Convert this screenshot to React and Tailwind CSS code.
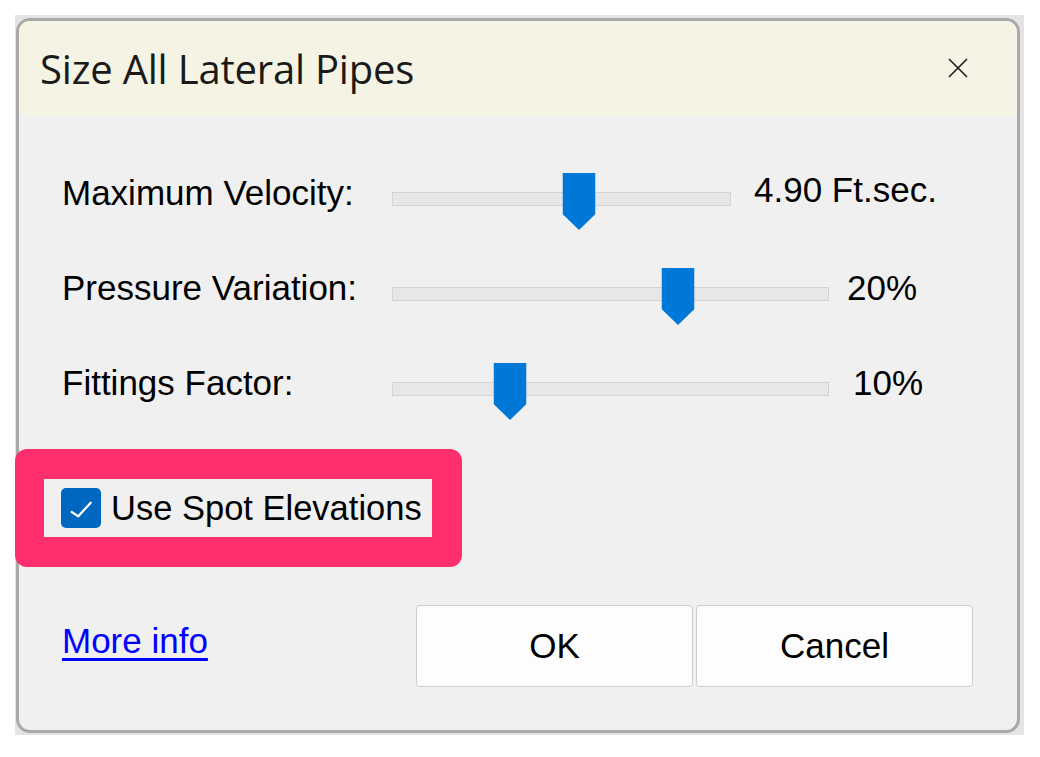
const arial = { fontFamily: '"Liberation Sans", Arial, sans-serif' };

const sliders = [
  { label: "Maximum Velocity:", value: "4.90 Ft.sec.", pos: 0.553, width: "w-[339px]", valueClass: "ml-[23px] -mt-[3px]" },
  { label: "Pressure Variation:", value: "20%", pos: 0.656, width: "w-[437px]", valueClass: "ml-[18px]" },
  { label: "Fittings Factor:", value: "10%", pos: 0.269, width: "w-[437px]", valueClass: "ml-[24px]" },
];

function Thumb({ pos }) {
  return (
    <svg
      className="absolute -top-[20px] -translate-x-1/2"
      style={{ left: `${pos * 100}%` }}
      width="33"
      height="57"
      viewBox="0 0 33 57"
    >
      <polygon points="0,0 33,0 33,41 16.5,57 0,41" fill="#0078d7" />
    </svg>
  );
}

function SliderRow({ label, value, pos, width, valueClass }) {
  return (
    <div className="flex items-start">
      <div className="w-[330px] leading-[40px]">{label}</div>
      <div className={`relative mt-[19px] h-[14px] ${width} border border-[#d4d4d4] bg-[#e6e7e8]`}>
        <Thumb pos={pos} />
      </div>
      <div className={`leading-[40px] ${valueClass}`}>{value}</div>
    </div>
  );
}

export default function App() {
  return (
    <div className="min-h-screen bg-white pl-[15px] pt-[15px]">
      <div className="w-[1009px] h-[720px] bg-[#e4e4e4] pl-px pt-[3px]">
        <div
          className="w-[1004px] h-[715px] rounded-[14px] border-[3px] border-[#a9a9a9] bg-[#f0f0f0] flex flex-col text-black"
          style={arial}
        >
          {/* title bar */}
          <div className="h-[95px] shrink-0 rounded-t-[11px] bg-[#f5f3e3] flex items-center justify-between pl-[21px] pr-[49px]">
            <h1
              className="text-[40px] tracking-[-0.2px] text-[#1a1a1a]"
              style={{ fontFamily: '"Open Sans", "Noto Sans", sans-serif' }}
            >
              Size All Lateral Pipes
            </h1>
            <svg width="20" height="20" viewBox="0 0 20 20" className="-mt-[2px]">
              <path d="M1 1 L19 19 M19 1 L1 19" stroke="#1a1a1a" strokeWidth="1.6" fill="none" />
            </svg>
          </div>

          {/* body */}
          <div className="flex-1 pl-[43px] pt-[57px] text-[35px]">
            <div className="flex flex-col gap-[55px]">
              {sliders.map((s) => (
                <SliderRow key={s.label} {...s} />
              ))}
            </div>

            <div className="mt-[46px] -ml-[47px] w-[447px] h-[118px] rounded-[12px] bg-[#ff2e6c] pl-[29px] pt-[30px]">
              <label className="w-[388px] h-[58px] bg-[#f0f0f0] flex items-center pl-[17px]">
                <span className="w-[40px] h-[40px] rounded-[5px] bg-[#0067c0] flex items-center justify-center">
                  <svg width="40" height="40" viewBox="0 0 40 40">
                    <polyline
                      points="10.7,24 17.3,28.3 29.7,14.7"
                      fill="none"
                      stroke="white"
                      strokeWidth="2.2"
                      strokeLinecap="round"
                      strokeLinejoin="round"
                    />
                  </svg>
                </span>
                <span className="ml-[10px] leading-[40px] text-[34.5px]">Use Spot Elevations</span>
              </label>
            </div>

            <div className="mt-[38px] flex items-start justify-between pr-[44px]">
              <a href="#" className="mt-[16px] leading-[40px] text-[#0000ff] underline underline-offset-[5px]">
                More info
              </a>
              <div className="flex gap-[3px]">
                <button className="w-[277px] h-[82px] rounded-[4px] border border-[#cccccc] bg-[#fdfdfd]">OK</button>
                <button className="w-[277px] h-[82px] rounded-[4px] border border-[#cccccc] bg-[#fdfdfd]">Cancel</button>
              </div>
            </div>
          </div>
        </div>
      </div>
    </div>
  );
}
